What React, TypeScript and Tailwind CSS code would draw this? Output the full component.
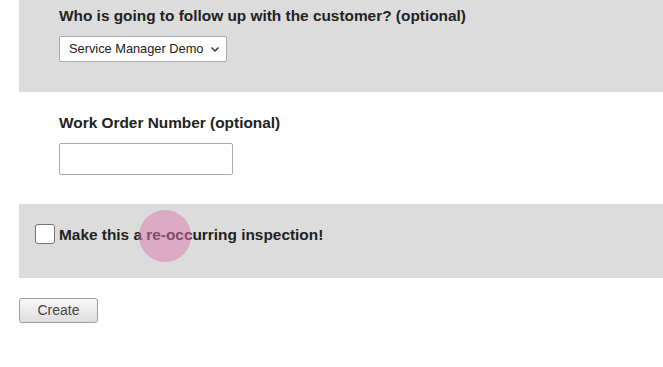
export default function App() {
  return (
    <div className="h-[367px] w-[663px] overflow-hidden bg-white font-['Liberation_Sans',Arial,sans-serif] text-[#222]">
      <div className="ml-[19px] h-[92px] bg-[#dcdcdc] pl-[40px] pt-[6px]">
        <div className="text-[15.4px] font-bold leading-[19px]">Who is going to follow up with the customer? (optional)</div>
        <div className="mt-[11px] flex h-[26px] w-[168px] items-center justify-between rounded-[2px] border border-[#a9a9a9] bg-white pl-[9px] pr-[6px] text-[12.8px] whitespace-nowrap text-[#222]">
          <span>Service Manager Demo</span>
          <svg width="10" height="10" viewBox="0 0 10 10" fill="none" stroke="#333" strokeWidth="1.5">
            <path d="M1.5 3.5l3.5 3.5 3.5-3.5" />
          </svg>
        </div>
      </div>
      <div className="ml-[19px] h-[112px] pl-[40px] pt-[21px]">
        <div className="text-[15.4px] font-bold leading-[19px]">Work Order Number (optional)</div>
        <div className="mt-[11px] h-[32px] w-[174px] rounded-[2px] border border-[#a9a9a9] bg-white" />
      </div>
      <div className="relative ml-[19px] flex h-[74px] items-start bg-[#dcdcdc] pl-[16px] pt-[20px]">
        <div className="h-[20px] w-[20px] rounded-[3px] border border-[#767676] bg-white" />
        <div className="ml-[4px] mt-[1px] text-[15.4px] font-bold leading-[19px]">Make this a re-occurring inspection!</div>
        <div className="absolute left-[120px] top-[6px] h-[52px] w-[52px] rounded-full bg-[#dc78aa]/50" />
      </div>
      <div className="ml-[19px] mt-[20px] flex h-[25px] w-[79px] items-center justify-center rounded-[3px] border border-[#a0a0a0] bg-gradient-to-b from-[#f8f8f8] to-[#dedede] text-[14px] text-[#444]">
        Create
      </div>
    </div>
  );
}
